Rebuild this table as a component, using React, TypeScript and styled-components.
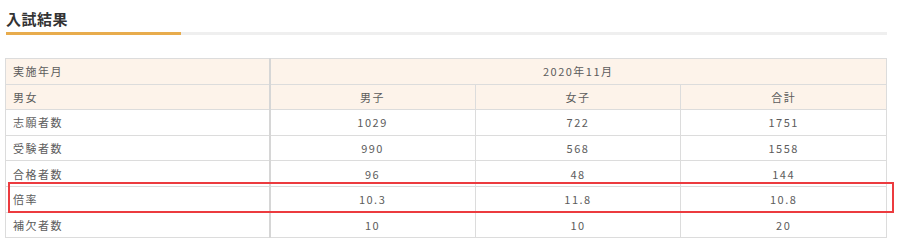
import React from "react";
import styled, { createGlobalStyle } from "styled-components";

const Global = createGlobalStyle`
  body {
    margin: 0;
    background: #fff;
    font-family: "Noto Sans CJK JP", "Noto Sans", sans-serif;
    color: #555;
  }
`;

const Page = styled.div`
  width: 881px;
  padding: 8px 0 0 6px;
`;

const Title = styled.h2`
  margin: 0;
  font-size: 15px;
  line-height: 22px;
  font-weight: 700;
  color: #333;
  letter-spacing: 0.5px;
  padding-bottom: 2px;
`;

const Rule = styled.div`
  height: 3px;
  background: #efefef;
  display: flex;
`;

const RuleAccent = styled.div`
  width: 175px;
  background: #e8ac4d;
`;

const TableWrap = styled.div`
  position: relative;
  margin-top: 23px;
  margin-left: -1px;
`;

const Table = styled.table`
  width: 882px;
  border-collapse: collapse;
  table-layout: fixed;
  font-size: 11px;
  letter-spacing: 1.5px;
  color: #5c5c5c;
`;

const Row = styled.tr<{ $head?: boolean }>`
  height: 25.6px;
  background: ${(p) => (p.$head ? "#fdf3ea" : "#fff")};
`;

const Cell = styled.td<{ $label?: boolean }>`
  border: 1px solid #dcdcdc;
  padding: 0 7px;
  text-align: ${(p) => (p.$label ? "left" : "center")};
  ${(p) => (p.$label ? "border-right: 2px solid #d6d6d6;" : "")}
  white-space: nowrap;
`;

const Highlight = styled.div`
  position: absolute;
  left: 3px;
  top: 124px;
  width: 882px;
  height: 27px;
  border: 2px solid #ec3b3f;
  pointer-events: none;
`;

const rows: [string, string, string, string][] = [
  ["志願者数", "1029", "722", "1751"],
  ["受験者数", "990", "568", "1558"],
  ["合格者数", "96", "48", "144"],
  ["倍率", "10.3", "11.8", "10.8"],
  ["補欠者数", "10", "10", "20"],
];

export default function App() {
  return (
    <>
      <Global />
      <Page>
        <Title>入試結果</Title>
        <Rule>
          <RuleAccent />
        </Rule>
        <TableWrap>
          <Table>
            <colgroup>
              <col style={{ width: 264 }} />
              <col />
              <col />
              <col />
            </colgroup>
            <tbody>
              <Row $head>
                <Cell $label>実施年月</Cell>
                <Cell colSpan={3}>2020年11月</Cell>
              </Row>
              <Row $head>
                <Cell $label>男女</Cell>
                <Cell>男子</Cell>
                <Cell>女子</Cell>
                <Cell>合計</Cell>
              </Row>
              {rows.map((r) => (
                <Row key={r[0]}>
                  <Cell $label>{r[0]}</Cell>
                  <Cell>{r[1]}</Cell>
                  <Cell>{r[2]}</Cell>
                  <Cell>{r[3]}</Cell>
                </Row>
              ))}
            </tbody>
          </Table>
          <Highlight />
        </TableWrap>
      </Page>
    </>
  );
}
